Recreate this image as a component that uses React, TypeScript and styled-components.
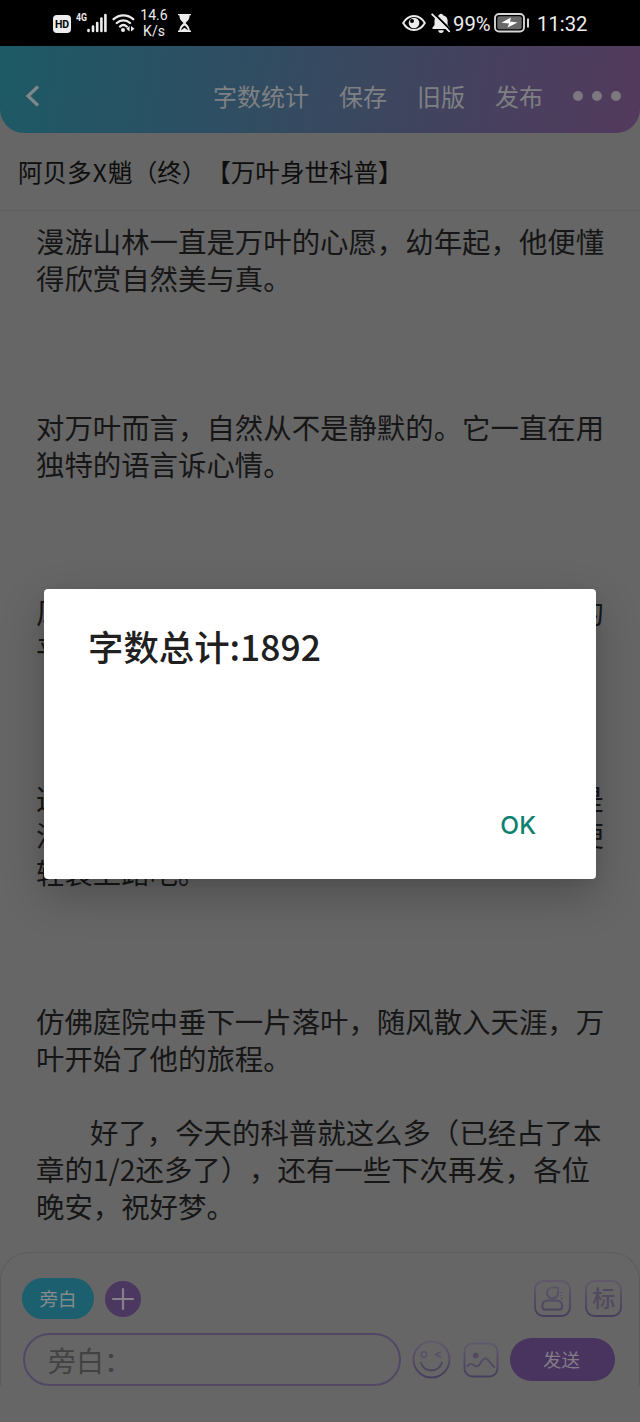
import React from "react";
import styled, { createGlobalStyle, css } from "styled-components";

const Global = createGlobalStyle`
  * { box-sizing: border-box; }
  body { margin: 0; background: #666; }
`;

const Screen = styled.div`
  position: relative;
  width: 640px;
  height: 1422px;
  overflow: hidden;
  display: flex;
  flex-direction: column;
  background: #666;
  color: #161616;
  font-family: "Noto Sans CJK SC", sans-serif;
  text-spacing-trim: space-all;
  white-space: nowrap;
`;

const StatusBar = styled.div`
  height: 46px;
  flex: none;
  background: #000;
  color: #ececec;
  display: flex;
  align-items: center;
  justify-content: space-between;
  padding: 0 53px 0 52px;
`;

const StatusGroup = styled.div`
  display: flex;
  align-items: center;
  svg { display: block; flex: none; }
`;

const Speed = styled.div`
  width: 30px;
  margin: 0 7px 0 4px;
  font: 14px/16px Roboto, sans-serif;
  text-align: center;
`;

const StatusText = styled.span<{ $w: number }>`
  width: ${(p) => p.$w}px;
  padding-top: 2px;
  font-family: Roboto, sans-serif;
  font-size: 20.3px;
  line-height: 30px;
`;

const Header = styled.header`
  height: 87px;
  flex: none;
  display: flex;
  align-items: center;
  padding: 13px 19px 0 24px;
  border-radius: 0 0 24px 24px;
  background: linear-gradient(100deg, #1d5a65 0%, #2d4f63 33%, #3b475f 58%, #493f5e 80%, #533a5d 100%);
  color: #7f8083;
`;

const Nav = styled.nav`
  display: flex;
  gap: 30px;
  margin-left: auto;
  font-size: 24px;
  line-height: 36px;
`;

const Dots = styled.div`
  display: flex;
  gap: 9px;
  margin-left: 30px;
  i { width: 10px; height: 10px; border-radius: 50%; background: #7d7780; }
`;

const Title = styled.h1`
  margin: 0;
  height: 78px;
  flex: none;
  padding: 0 18px;
  border-bottom: 1px solid #5e5e5e;
  font-size: 24.55px;
  font-weight: 400;
  line-height: 77px;
  color: #0e0e0e;
  span { padding: 0 1.2px; }
`;

const Article = styled.main`
  flex: none;
  height: 1041px;
  padding: 11px 36px 0;
  font-size: 28.42px;
  line-height: 37.12px;
`;

const Paragraph = styled.p<{ $gap?: number; $indent?: boolean }>`
  margin: 0 0 ${(p) => (p.$gap ?? 0) * 37.12}px;
  ${(p) => p.$indent && css`text-indent: 54px;`}
`;

const Line = styled.span`
  display: flex;
  justify-content: space-between;
`;

const Composer = styled.footer`
  height: 134px;
  flex: none;
  display: flex;
  flex-direction: column;
  padding: 25px 17px 0 21px;
  border: solid #5c5b5f;
  border-width: 1px 1px 0;
  border-radius: 28px 28px 0 0;
`;

const Tools = styled.div`
  display: flex;
  align-items: center;
  height: 41px;
  margin-bottom: 14px;
  svg { display: block; }
`;

const Chip = styled.button`
  width: 72px;
  height: 41px;
  padding: 0;
  margin-right: 11px;
  border: 0;
  border-radius: 21px;
  background: #1c5f6f;
  color: #858b8d;
  font: 18.5px/41px "Noto Sans CJK SC", sans-serif;
`;

const ToolRight = styled.div`
  display: flex;
  gap: 14px;
  margin-left: auto;
`;

const InputRow = styled.div`
  display: flex;
  align-items: center;
  height: 53px;
  padding-left: 1px;
  svg { display: block; flex: none; }
`;

const Field = styled.div`
  width: 378px;
  height: 53px;
  border: 2px solid #524866;
  border-radius: 27px;
  padding-left: 23px;
  font-size: 28px;
  line-height: 50px;
  color: #424242;
  margin-right: 11px;
`;

const Send = styled.button`
  width: 105px;
  height: 43px;
  padding: 0 2px 0 0;
  margin-left: 11px;
  border: 0;
  border-radius: 22px;
  background: #49345f;
  color: #827c88;
  font: 18.5px/43px "Noto Sans CJK SC", sans-serif;
`;

const Overlay = styled.div`
  position: absolute;
  inset: 46px 0 0;
  display: flex;
  justify-content: center;
  align-items: flex-start;
  padding-top: 543px;
`;

const Dialog = styled.section`
  width: 552px;
  height: 290px;
  display: flex;
  flex-direction: column;
  justify-content: space-between;
  padding: 31px 60px 34px 44px;
  border-radius: 4px;
  background: #fff;
  box-shadow: 0 16px 44px rgba(0, 0, 0, 0.24), 0 2px 8px rgba(0, 0, 0, 0.06);
`;

const DialogTitle = styled.h2`
  margin: 0;
  font-size: 35.4px;
  font-weight: 500;
  line-height: 52px;
  color: #202020;
`;

const Ok = styled.button`
  align-self: flex-end;
  padding: 0;
  border: 0;
  background: none;
  color: #0b8070;
  font: 500 24.5px/40px Inter, sans-serif;
`;

const HdIcon = () => (
  <svg width="19" height="19" viewBox="0 0 19 19">
    <rect x="1" y="1" width="18" height="18" rx="4" fill="#ececec" />
    <text x="10" y="14" textAnchor="middle" fontFamily="Roboto" fontSize="10.5" fontWeight="700" fill="#000">HD</text>
  </svg>
);

const SignalIcon = () => (
  <svg width="32" height="22" viewBox="0 0 32 22" style={{ marginLeft: 5 }}>
    <text x="0" y="9" fontFamily="Roboto" fontSize="10.5" fontWeight="700" fill="#ececec" textLength="11" lengthAdjust="spacingAndGlyphs">4G</text>
    <path d="M12.5 18v1M17 14.5V19M21.2 11V19M25.4 6.5V19M29.4 3V19" stroke="#ececec" strokeWidth="2.6" strokeLinecap="round" />
  </svg>
);

const WifiIcon = () => (
  <svg width="23" height="22" viewBox="0 0 23 22" style={{ marginLeft: 4 }}>
    <g fill="none" stroke="#ececec" strokeWidth="2.3" strokeLinecap="round">
      <path d="M1.6 7.2C7 2 15.8 2 21.2 7.2M4.8 11c3.8-3.5 9.4-3.5 13.2 0M8 14.6c2-1.8 4.8-1.8 6.8 0" />
    </g>
    <circle cx="11" cy="18" r="2" fill="#ececec" />
    <path d="M17.6 14v5.4l-3.3-2.7zM19 14v5.4l3.5-2.7z" fill="#ececec" />
  </svg>
);

const HourglassIcon = () => (
  <svg width="15" height="20" viewBox="0 0 15 20" style={{ marginLeft: 1 }}>
    <path d="M1 1h13v1.300h-1.300c-.2 3.700-1.500 5.400-4.200 7.700 2.700 2.300 4 4.300 4.200 7.500H14V19H1v-1.500h1.300C2.500 14.300 3.800 12.300 6.500 10 3.800 7.700 2.500 6 2.300 2.300H1z" fill="#ececec" />
    <path d="M4 17.200c.3-1.900 1.500-3.300 3.500-4.800 2 1.500 3.200 2.900 3.500 4.800l-3.500-2.500z" fill="#000" />
  </svg>
);

const EyeIcon = () => (
  <svg width="24" height="18" viewBox="0 0 24 18">
    <path d="M1.200 9C6.500-.4 17.500-.4 22.800 9 17.500 18.400 6.500 18.400 1.200 9z" fill="none" stroke="#ececec" strokeWidth="2" />
    <circle cx="12" cy="9" r="5.300" fill="#ececec" />
    <circle cx="10" cy="7" r="2" fill="#000" />
  </svg>
);

const BellOffIcon = () => (
  <svg width="20" height="20" viewBox="0 0 20 20" style={{ marginLeft: 5, marginRight: 2 }}>
    <path d="M1.500 16v-1.500l2-2.500V7.500C3.500 4.800 5.500 3 8 2.300a2.100 2.100 0 0 1 4 0c2.700.6 4.600 2.500 4.600 5.200V12l2 2.500V16zM7.300 17.200h5.400a2.700 2.700 0 0 1-5.400 0z" fill="#ececec" />
    <path d="M2.700.1l17 17" stroke="#000" strokeWidth="2" />
    <path d="M1.200 1.300l17 17" stroke="#ececec" strokeWidth="1.900" strokeLinecap="round" />
  </svg>
);

const BatteryIcon = () => (
  <svg width="36" height="20" viewBox="0 0 36 20" style={{ marginLeft: 2, marginRight: 7 }}>
    <rect x="1" y="1" width="29" height="17.500" rx="4" fill="#000" stroke="#d6d6d6" strokeWidth="1.900" />
    <rect x="3.300" y="3.300" width="24.400" height="13" rx="2" fill="#686868" />
    <path d="M17 4.500l-9.500 5.300 7.600.8-1.600 4 10-5.200-7.600-.8z" fill="#fff" />
    <path d="M34 6.300v7.500" stroke="#d6d6d6" strokeWidth="2" strokeLinecap="round" />
  </svg>
);

const IconGradient = ({ id }: { id: string }) => (
  <linearGradient id={id} x1="0" y1="0" x2="0" y2="38" gradientUnits="userSpaceOnUse">
    <stop offset="0" stopColor="#625a6c" />
    <stop offset="1" stopColor="#463c5c" />
  </linearGradient>
);

const RoleIcon = () => (
  <svg width="37" height="37" viewBox="0 0 37 37" fill="none" stroke="url(#role)" strokeWidth="1.900">
    <defs><IconGradient id="role" /></defs>
    <rect x="1" y="1" width="35" height="35" rx="8.500" />
    <path d="M24 7.500v5.300a5.500 5.500 0 1 1-5.500-5.300H24z" />
    <path d="M14 20.500h8.500c3.300 0 5.500 2 5.500 4.600V27c0 1.600-1 2.500-2.500 2.500H11c-1.500 0-2.500-.9-2.500-2.500v-1.900c0-2.600 2.200-4.600 5.500-4.600z" />
    <path d="M26.500 12.500h2.500M26.500 15.500h2M26.500 18.500h2.500" strokeWidth="1.200" />
  </svg>
);

const TagIcon = () => (
  <svg width="37" height="37" viewBox="0 0 37 37">
    <defs><IconGradient id="tag" /></defs>
    <rect x="1" y="1" width="35" height="35" rx="8.500" fill="none" stroke="url(#tag)" strokeWidth="1.900" />
    <text x="18.700" y="27" textAnchor="middle" fontFamily="Noto Sans CJK SC" fontSize="23" fontWeight="500" fill="#52495f">标</text>
  </svg>
);

const SmileIcon = () => (
  <svg width="39" height="39" viewBox="0 0 39 39" fill="none" stroke="url(#smile)" strokeWidth="1.900" strokeLinecap="round">
    <defs><IconGradient id="smile" /></defs>
    <circle cx="19.500" cy="19.500" r="18" />
    <circle cx="12" cy="14.500" r="2.700" strokeWidth="1.400" />
    <path d="M28.500 12l-5 2.500 5 2.500" strokeWidth="1.400" />
    <path d="M9 22.500c3.300 10.600 17.500 10.600 21 0" />
  </svg>
);

const PictureIcon = () => (
  <svg width="36" height="36" viewBox="0 0 36 36" fill="none" stroke="url(#pic)" strokeWidth="1.900" strokeLinecap="round" style={{ marginLeft: 12 }}>
    <defs><IconGradient id="pic" /></defs>
    <rect x="1.500" y="1.500" width="33" height="33" rx="8" />
    <circle cx="12.700" cy="13.500" r="2.800" fill="#52485f" stroke="none" />
    <path d="M4.500 24c2.500-3 4.500-2.500 6.500-.8 2.200 1.700 4.500 1.300 6.200-1.500 1.800-3 3-5.400 5-5.400 2.800 0 4.300 5 9.300 8.700" />
  </svg>
);

export default function App() {
  return (
    <Screen>
      <Global />
      <StatusBar>
        <StatusGroup>
          <HdIcon />
          <SignalIcon />
          <WifiIcon />
          <Speed>14.6<br />K/s</Speed>
          <HourglassIcon />
        </StatusGroup>
        <StatusGroup>
          <EyeIcon />
          <BellOffIcon />
          <StatusText $w={39}>99%</StatusText>
          <BatteryIcon />
          <StatusText $w={50}>11:32</StatusText>
        </StatusGroup>
      </StatusBar>
      <Header>
        <svg width="18" height="24" viewBox="0 0 18 24">
          <path d="M14 2.500L4 12l10 9.500" fill="none" stroke="#7e8888" strokeWidth="3.200" />
        </svg>
        <Nav>
          <span>字数统计</span>
          <span>保存</span>
          <span>旧版</span>
          <span>发布</span>
        </Nav>
        <Dots><i /><i /><i /></Dots>
      </Header>
      <Title>阿贝多<span>X</span>魈（终）【万叶身世科普】</Title>
      <Article>
        <Paragraph $gap={3}>漫游山林一直是万叶的心愿，幼年起，他便懂<br />得欣赏自然美与真。</Paragraph>
        <Paragraph $gap={3}>对万叶而言，自然从不是静默的。它一直在用<br />独特的语言诉心情。</Paragraph>
        <Paragraph $gap={3}>
          <Line><span>风</span><span>的</span></Line>
          平
        </Paragraph>
        <Paragraph $gap={3}>
          <Line><span>这</span><span>是</span></Line>
          <Line><span>流</span><span>便</span></Line>
          轻装上路吧。
        </Paragraph>
        <Paragraph $gap={1}>仿佛庭院中垂下一片落叶，随风散入天涯，万<br />叶开始了他的旅程。</Paragraph>
        <Paragraph $indent>好了，今天的科普就这么多（已经占了本<br />章的1/2还多了），还有一些下次再发，各位<br />晚安，祝好梦。</Paragraph>
      </Article>
      <Composer>
        <Tools>
          <Chip>旁白</Chip>
          <svg width="36" height="36" viewBox="0 0 36 36">
            <circle cx="18" cy="18" r="18" fill="#4c3761" />
            <path d="M18 8v20M8 18h20" stroke="#858089" strokeWidth="2.200" strokeLinecap="round" />
          </svg>
          <ToolRight>
            <RoleIcon />
            <TagIcon />
          </ToolRight>
        </Tools>
        <InputRow>
          <Field>旁白：</Field>
          <SmileIcon />
          <PictureIcon />
          <Send>发送</Send>
        </InputRow>
      </Composer>
      <Overlay>
        <Dialog role="dialog">
          <DialogTitle>字数总计:1892</DialogTitle>
          <Ok>OK</Ok>
        </Dialog>
      </Overlay>
    </Screen>
  );
}
